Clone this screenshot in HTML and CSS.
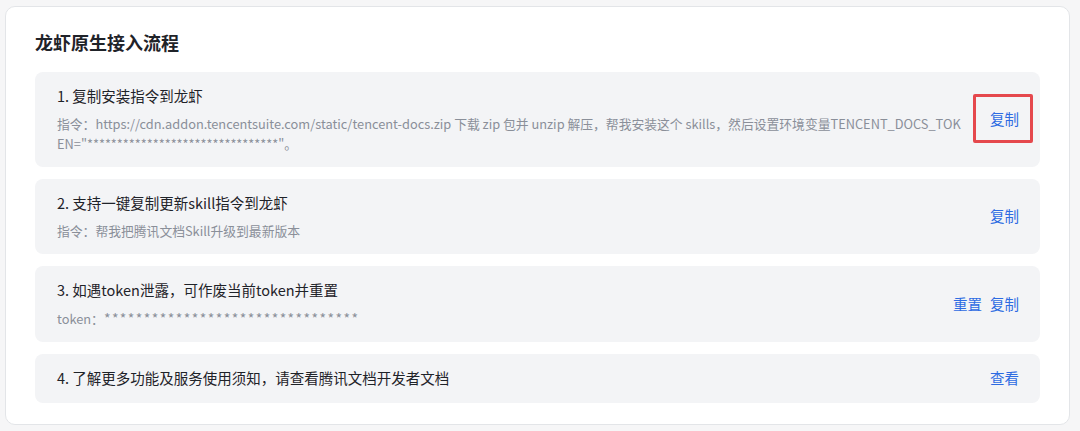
FILE: index.html
```html
<!DOCTYPE html>
<html lang="zh-CN">
<head>
  <meta charset="UTF-8" />
  <meta name="viewport" content="width=device-width, initial-scale=1.0" />
  <title>龙虾原生接入流程</title>
  <link rel="stylesheet" href="styles.css">
</head>
<body>

  <!-- 接入流程卡片 -->
  <section class="panel">
    <h2 class="panel-title">龙虾原生接入流程</h2>

    <div class="steps">
      <div class="step">
        <div class="step-body">
          <div class="step-title">1. 复制安装指令到龙虾</div>
          <div class="step-desc">指令：https://cdn.addon.tencentsuite.com/static/tencent-docs.zip 下载 zip 包并 unzip 解压，帮我安装这个 skills，然后设置环境变量TENCENT_DOCS_TOKEN="********************************"。</div>
        </div>
        <div class="step-actions">
          <a class="action is-marked" href="#">复制</a>
        </div>
      </div>

      <div class="step">
        <div class="step-body">
          <div class="step-title">2. 支持一键复制更新skill指令到龙虾</div>
          <div class="step-desc">指令：帮我把腾讯文档Skill升级到最新版本</div>
        </div>
        <div class="step-actions">
          <a class="action" href="#">复制</a>
        </div>
      </div>

      <div class="step">
        <div class="step-body">
          <div class="step-title">3. 如遇token泄露，可作废当前token并重置</div>
          <div class="step-desc">token：<span class="mask">********************************</span></div>
        </div>
        <div class="step-actions">
          <a class="action" href="#">重置</a>
          <a class="action" href="#">复制</a>
        </div>
      </div>

      <div class="step">
        <div class="step-body">
          <div class="step-title">4. 了解更多功能及服务使用须知，请查看腾讯文档开发者文档</div>
        </div>
        <div class="step-actions">
          <a class="action" href="#">查看</a>
        </div>
      </div>
    </div>
  </section>

</body>
</html>
```

FILE: styles.css
```css
* {
  margin: 0;
  padding: 0;
  box-sizing: border-box;
}

body {
  margin: 6px 10px 8px 5px;
  background: #f6f6f7;
  font-family: "Noto Sans CJK SC", "Noto Sans", sans-serif;
  color: #1f2329;
}

.panel {
  background: #fff;
  border: 1px solid #e3e5e8;
  border-radius: 10px;
  padding: 22px 29px 21px;
}

.panel-title {
  font-size: 18px;
  line-height: 26px;
  font-weight: 700;
  margin-bottom: 17px;
}

.steps {
  display: flex;
  flex-direction: column;
  gap: 12px;
}

.step {
  display: flex;
  align-items: center;
  gap: 24px;
  background: #f3f4f6;
  border-radius: 8px;
  padding: 12px 21px 13px 22px;
}

.step-body {
  flex: 1;
  min-width: 0;
}

.step-title {
  font-size: 14.5px;
  line-height: 24px;
  color: #1f2329;
}

.step-desc {
  margin-top: 6px;
  font-size: 12.8px;
  line-height: 20px;
  color: #8a8f99;
  word-break: break-all;
}

.step-desc .mask {
  font-size: 14px;
  letter-spacing: 1.45px;
}

.step-actions {
  display: flex;
  gap: 8px;
  flex-shrink: 0;
}

.action {
  position: relative;
  font-size: 14.5px;
  line-height: 20px;
  color: #2d6be2;
  text-decoration: none;
}

/* 标注框 */
.action.is-marked::after {
  content: "";
  position: absolute;
  left: -17px;
  right: -14px;
  top: -15px;
  bottom: -14px;
  border: 3px solid #e5484d;
  border-radius: 2px;
}
```
